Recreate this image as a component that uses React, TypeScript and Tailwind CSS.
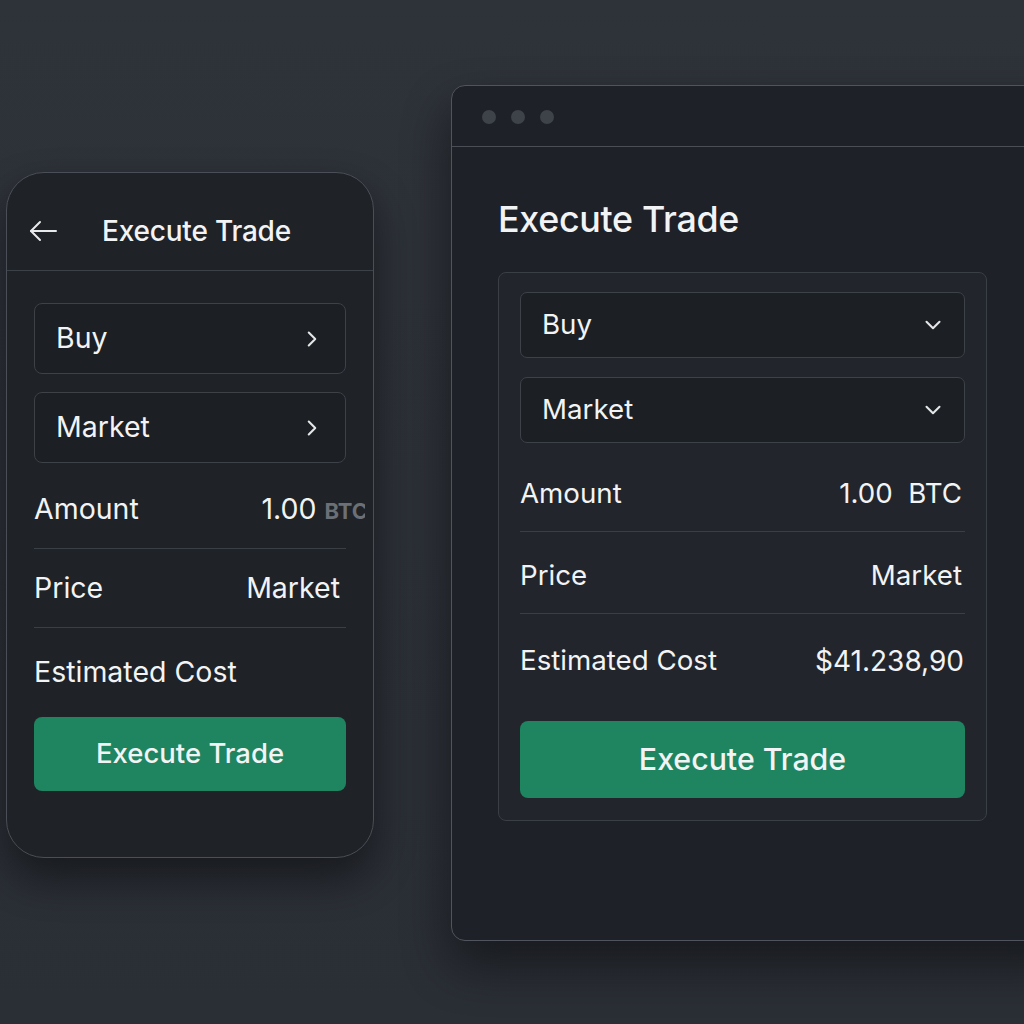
import { ChevronDown, ChevronRight } from "lucide-react";

const font = { fontFamily: "Inter, 'Noto Sans', sans-serif" };

// Trade ticket shown twice: a phone frame on the left, a desktop window on the right.
export default function App() {
  return (
    <div
      style={font}
      className="w-[1024px] h-[1024px] overflow-hidden bg-gradient-to-b from-[#2e3239] to-[#2a2e35] text-[#f2f3f5] flex items-start"
    >
      <PhoneView />
      <DesktopView />
    </div>
  );
}

function PhoneView() {
  return (
    <div className="ml-[6px] mt-[172px] w-[368px] h-[686px] shrink-0 rounded-[38px] border border-[#4a4e56] bg-[#1f2227] shadow-[0_20px_40px_rgba(0,0,0,0.45)] overflow-hidden flex flex-col">
      <div className="h-[98px] shrink-0 border-b border-[#3c4047] flex items-start pt-[40px] pl-[22px]">
        <div className="h-[36px] flex items-center">
          <svg width="28" height="22" viewBox="0 0 28 22" fill="none" stroke="#e8e9eb" strokeWidth="2" strokeLinecap="round" strokeLinejoin="round">
            <path d="M27 11H2" />
            <path d="M11 2L2 11l9 9" />
          </svg>
          <span className="ml-[45px] text-[28px] font-medium tracking-[-0.2px]">Execute Trade</span>
        </div>
      </div>
      <div className="px-[27px] pt-[32px] flex flex-col">
        <PhoneField label="Buy" />
        <div className="h-[18px]" />
        <PhoneField label="Market" />
        <div className="h-[8px]" />
        <div className="h-[77px] -mr-[19px] overflow-hidden flex items-center justify-between">
          <span className="text-[28.5px]">Amount</span>
          <span className="flex items-baseline gap-[8px] -mr-[3px]">
            <span className="text-[28.5px]">1.00</span>
            <span className="text-[22px] font-bold text-[#6b6f76]">BTC</span>
          </span>
        </div>
        <div className="h-px bg-[#3a3e45]" />
        <div className="h-[78px] flex items-center justify-between pr-[6px]">
          <span className="text-[28.5px]">Price</span>
          <span className="text-[28.5px]">Market</span>
        </div>
        <div className="h-px bg-[#3a3e45]" />
        <div className="pt-[26px] h-[62px] flex items-center">
          <span className="text-[28.5px]">Estimated Cost</span>
        </div>
        <button className="mt-[27px] h-[74px] rounded-[8px] bg-[#1e8560] text-[27.5px] font-medium">
          Execute Trade
        </button>
      </div>
    </div>
  );
}

function PhoneField({ label }: { label: string }) {
  return (
    <div className="h-[71px] rounded-[8px] border border-[#3d4148] bg-[#1c1f24] flex items-center justify-between pl-[21px] pr-[20px]">
      <span className="text-[28.5px]">{label}</span>
      <ChevronRight size={26} strokeWidth={1.9} className="text-[#e5e6e8]" />
    </div>
  );
}

function DesktopView() {
  return (
    <div className="ml-[77px] mt-[85px] w-[620px] h-[856px] shrink-0 rounded-[14px] border border-[#50545c] bg-[#1e2127] shadow-[0_24px_48px_rgba(0,0,0,0.45)] flex flex-col">
      <div className="h-[61px] shrink-0 border-b border-[#4a4e56] flex items-center gap-[15px] pl-[30px] pt-[2px]">
        <span className="w-[14px] h-[14px] rounded-full bg-[#3e4249]" />
        <span className="w-[14px] h-[14px] rounded-full bg-[#3e4249]" />
        <span className="w-[14px] h-[14px] rounded-full bg-[#3e4249]" />
      </div>
      <div className="pl-[46px] flex flex-col">
        <div className="mt-[53px] h-[40px] flex items-center text-[35.8px] font-medium tracking-[-0.3px]">
          Execute Trade
        </div>
        <div className="mt-[32px] w-[489px] rounded-[8px] border border-[#3a3e45] bg-[#22252b] px-[21px] pt-[19px] pb-[22px] flex flex-col">
          <DesktopSelect label="Buy" />
          <div className="h-[19px]" />
          <DesktopSelect label="Market" />
          <div className="mt-[14px] h-[74px] flex items-center justify-between">
            <span className="text-[27.7px]">Amount</span>
            <span className="text-[27.7px] pr-[3px]">1.00&nbsp;&nbsp;BTC</span>
          </div>
          <div className="h-px bg-[#3a3e45]" />
          <div className="h-[81px] pt-[6px] flex items-center justify-between">
            <span className="text-[27.7px]">Price</span>
            <span className="text-[27.7px] pr-[3px]">Market</span>
          </div>
          <div className="h-px bg-[#3a3e45]" />
          <div className="h-[94px] flex items-center justify-between">
            <span className="text-[27.7px]">Estimated Cost</span>
            <span className="text-[28px] pr-[1px]">$41.238,90</span>
          </div>
          <button className="mt-[13px] h-[77px] rounded-[8px] bg-[#1e8560] text-[30.3px] font-medium">
            Execute Trade
          </button>
        </div>
      </div>
    </div>
  );
}

function DesktopSelect({ label }: { label: string }) {
  return (
    <div className="h-[66px] rounded-[7px] border border-[#3d4148] bg-[#1c1f24] flex items-center justify-between pl-[21px] pr-[18px]">
      <span className="text-[27.7px]">{label}</span>
      <ChevronDown size={26} strokeWidth={1.9} className="text-[#e5e6e8]" />
    </div>
  );
}
